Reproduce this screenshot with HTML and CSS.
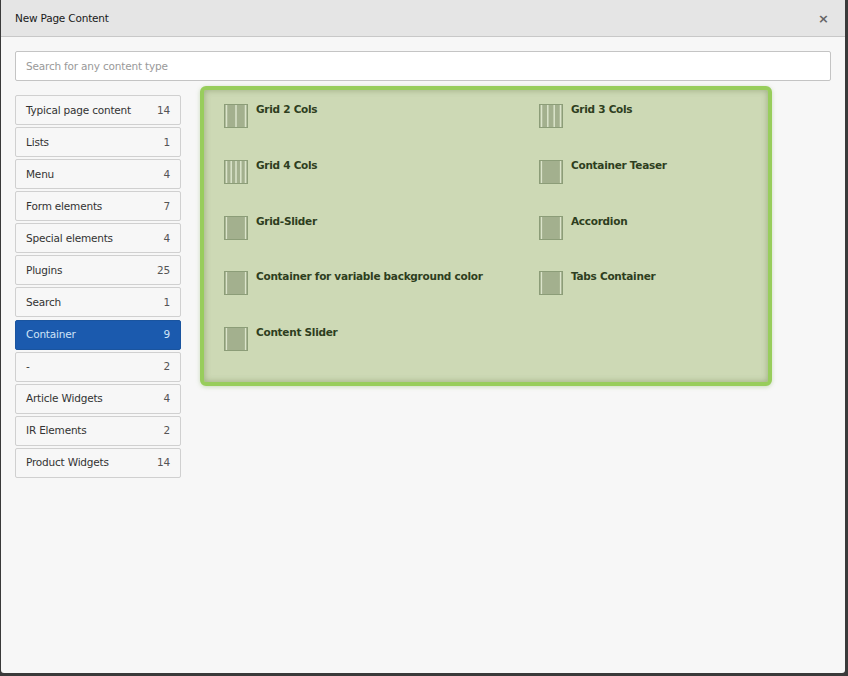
FILE: index.html
```html
<!DOCTYPE html>
<html lang="en">
<head>
<meta charset="utf-8">
<title>New Page Content</title>
<link rel="stylesheet" href="styles.css">
</head>
<body>
<svg class="defs" width="0" height="0" aria-hidden="true">
  <symbol id="i-2" viewBox="0 0 24 24"><rect x=".5" y=".5" width="23" height="23" fill="#a3b08e" stroke="#8c9d78"/><path d="M2.5 1v22M12 1v22M21.5 1v22" stroke="#dbe4cb" stroke-width="1.5"/></symbol>
  <symbol id="i-3" viewBox="0 0 24 24"><rect x=".5" y=".5" width="23" height="23" fill="#a3b08e" stroke="#8c9d78"/><path d="M2.5 1v22M8.8 1v22M15.2 1v22M21.5 1v22" stroke="#dbe4cb" stroke-width="1.5"/></symbol>
  <symbol id="i-4" viewBox="0 0 24 24"><rect x=".5" y=".5" width="23" height="23" fill="#a3b08e" stroke="#8c9d78"/><path d="M2.5 1v22M7.2 1v22M12 1v22M16.8 1v22M21.5 1v22" stroke="#dbe4cb" stroke-width="1.5"/></symbol>
  <symbol id="i-c" viewBox="0 0 24 24"><rect x=".5" y=".5" width="23" height="23" fill="#a3b08e" stroke="#8c9d78"/><path d="M2.5 1v22M21.5 1v22" stroke="#dbe4cb" stroke-width="1.2"/></symbol>
</svg>
<div class="modal">
  <header class="modal-header">
    <h1 class="modal-title">New Page Content</h1>
    <button class="close" type="button" aria-label="Close">×</button>
  </header>
  <div class="modal-body">
    <input class="search" type="text" placeholder="Search for any content type">
    <div class="columns">
      <nav class="tabs">
        <a class="tab"><span>Typical page content</span><span class="count">14</span></a>
        <a class="tab"><span>Lists</span><span class="count">1</span></a>
        <a class="tab"><span>Menu</span><span class="count">4</span></a>
        <a class="tab"><span>Form elements</span><span class="count">7</span></a>
        <a class="tab"><span>Special elements</span><span class="count">4</span></a>
        <a class="tab"><span>Plugins</span><span class="count">25</span></a>
        <a class="tab"><span>Search</span><span class="count">1</span></a>
        <a class="tab active"><span>Container</span><span class="count">9</span></a>
        <a class="tab"><span>-</span><span class="count">2</span></a>
        <a class="tab"><span>Article Widgets</span><span class="count">4</span></a>
        <a class="tab"><span>IR Elements</span><span class="count">2</span></a>
        <a class="tab"><span>Product Widgets</span><span class="count">14</span></a>
      </nav>
      <section class="panel">
        <a class="item"><svg class="icon"><use href="#i-2"/></svg><span class="label">Grid 2 Cols</span></a>
        <a class="item"><svg class="icon"><use href="#i-3"/></svg><span class="label">Grid 3 Cols</span></a>
        <a class="item"><svg class="icon"><use href="#i-4"/></svg><span class="label">Grid 4 Cols</span></a>
        <a class="item"><svg class="icon"><use href="#i-c"/></svg><span class="label">Container Teaser</span></a>
        <a class="item"><svg class="icon"><use href="#i-c"/></svg><span class="label">Grid-Slider</span></a>
        <a class="item"><svg class="icon"><use href="#i-c"/></svg><span class="label">Accordion</span></a>
        <a class="item"><svg class="icon"><use href="#i-c"/></svg><span class="label">Container for variable background color</span></a>
        <a class="item"><svg class="icon"><use href="#i-c"/></svg><span class="label">Tabs Container</span></a>
        <a class="item"><svg class="icon"><use href="#i-c"/></svg><span class="label">Content Slider</span></a>
      </section>
    </div>
  </div>
</div>
</body>
</html>
```
FILE: styles.css
```css
* { box-sizing: border-box; }
html, body { margin: 0; height: 676px; overflow: hidden; }
body {
  background: #3a3a3a;
  font-family: "DejaVu Sans", Verdana, sans-serif;
  font-size: 10.5px;
  letter-spacing: -.19px;
  color: #333;
  padding: 0 3px 3px 1px;
}
.defs { display: block; height: 0; }
.modal {
  height: 673px;
  background: #f7f7f7;
  border-radius: 0 0 3px 3px;
  display: flex;
  flex-direction: column;
}
.modal-header {
  height: 37px;
  flex: none;
  background: #e5e5e5;
  border-bottom: 1px solid #c8c8c8;
  display: flex;
  align-items: center;
  justify-content: space-between;
  padding: 0 16px 0 14px;
}
.modal-title { margin: 0; font-size: 10.5px; font-weight: 400; color: #1a1a1a; }
.close {
  border: 0;
  background: none;
  padding: 0;
  font: 700 13px/1 "DejaVu Sans", sans-serif;
  color: #666;
}
.modal-body { padding: 14px 14px 0 14px; }
.search {
  display: block;
  width: 816px;
  height: 30px;
  padding: 0 10px 1px;
  background: #fff;
  border: 1px solid #c4c4c4;
  border-radius: 2px;
  font: 10.5px "DejaVu Sans", sans-serif;
  letter-spacing: -.19px;
  color: #333;
  outline: 0;
}
.search::placeholder { color: #999; opacity: 1; }
.columns { display: flex; align-items: flex-start; margin-top: 5px; }
.tabs { width: 166px; flex: none; margin-top: 9px; display: flex; flex-direction: column; gap: 2.08px; }
.tab {
  height: 30px;
  display: flex;
  align-items: center;
  justify-content: space-between;
  padding: 0 10px 1px;
  background: #f7f7f7;
  border: 1px solid #d0d0d0;
  border-radius: 2px;
  color: #333;
}
.tab .count { color: #555; }
.tab.active { background: #1b5aae; border-color: #1a549f; color: #cfe3f7; }
.tab.active .count { color: #cfe3f7; }
.panel {
  width: 572px;
  height: 300px;
  margin-left: 19px;
  padding: 14px 20px 0;
  background: #cdd9b5;
  border: 4px solid #98cd5c;
  border-radius: 6px;
  box-shadow: inset 0 0 6px rgba(90, 110, 60, .45), 0 1px 4px rgba(120, 170, 80, .35);
  display: grid;
  grid-template-columns: 315px 1fr;
  grid-auto-rows: 55.8px;
  align-content: start;
}
.item { display: flex; align-items: flex-start; color: #2e3e20; }
.icon { width: 24px; height: 24px; flex: none; margin-right: 8px; }
.label { font-weight: 700; line-height: 13px; margin-top: -1px; letter-spacing: -.27px; }
```
